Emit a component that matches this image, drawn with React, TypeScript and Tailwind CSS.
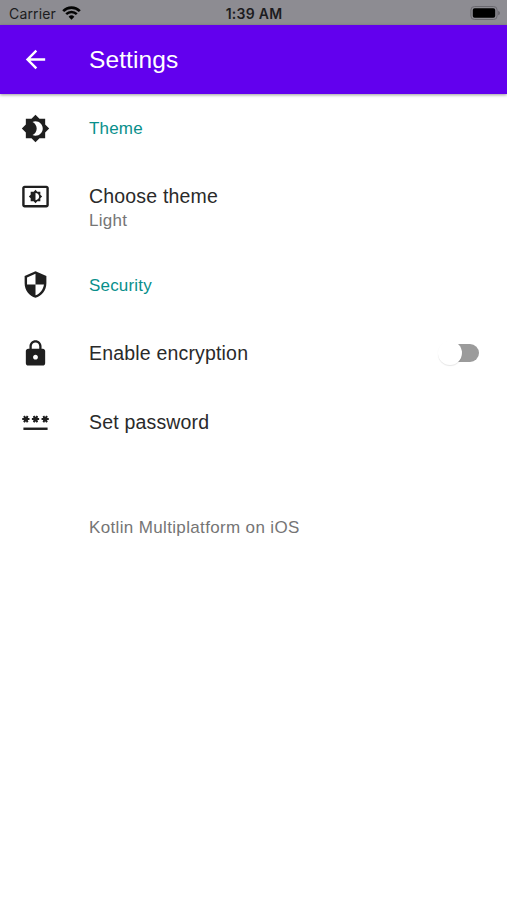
import React from 'react';
import { MdArrowBack, MdBrightness4, MdLock, MdSecurity, MdSettingsBrightness } from 'react-icons/md';

interface SettingRowProps {
  icon: React.ReactNode;
  children: React.ReactNode;
  trailing?: React.ReactNode;
}

const StatusBar: React.FC = () => (
  <div className="grid h-[25px] grid-cols-3 items-center bg-[#8d8c92] pt-[3px] font-['Inter',sans-serif] text-[14px] leading-none text-[#1c1c20]">
    <div className="flex items-center gap-[6px] pl-[9px]">
      <span className="tracking-[0.15px]">Carrier</span>
      <svg className="-mt-[2px] h-[14px] w-[19px]" viewBox="0 0 19 14" fill="none" stroke="#050505">
        <path d="M1.2 5.1a11.8 11.8 0 0 1 16.6 0" strokeWidth="2.7" />
        <path d="M4.2 8.2a7.6 7.6 0 0 1 10.6 0" strokeWidth="2.5" />
        <path d="M9.5 13.7 6.6 10.7a4.1 4.1 0 0 1 5.8 0Z" fill="#050505" stroke="none" />
      </svg>
    </div>
    <span className="pl-px text-center font-semibold tracking-[0.25px]">1:39 AM</span>
    <svg className="-mt-[3px] mr-[6px] h-[14px] w-[31px] justify-self-end" viewBox="0 0 31 14">
      <rect x="0.9" y="0.5" width="26.2" height="13" rx="3.5" fill="none" stroke="#6a696f" />
      <rect x="2.8" y="2.3" width="22.4" height="9.4" rx="1.8" fill="#000" />
      <path d="M28.3 4.7v4.6a2.5 2.5 0 0 0 0-4.6Z" fill="#5d5c62" />
    </svg>
  </div>
);

const PasswordIcon: React.FC = () => (
  <svg className="size-full" viewBox="0 0 24 24" fill="none" stroke="currentColor">
    <path d="M2 18h20" strokeWidth="2" />
    {[4, 12, 20].map((x) => (
      <g key={x} strokeWidth="1.6">
        <path d={`M${x - 3} 10h6M${x - 1.5} 7.4l3 5.2M${x + 1.5} 7.4l-3 5.2`} />
        <circle cx={x} cy="10" r="1.2" fill="currentColor" />
      </g>
    ))}
  </svg>
);

const SettingRow: React.FC<SettingRowProps> = ({ icon, children, trailing }) => (
  <div className="flex h-[68.5px] items-center pl-[20.5px] pr-[26px]">
    <div className="mr-[39.5px] mt-px size-[29px] shrink-0 text-[#1f1f1f]">{icon}</div>
    <div className="flex-1">{children}</div>
    {trailing}
  </div>
);

const Switch: React.FC = () => (
  <div className="relative mr-[2px] h-[18px] w-[34px] rounded-full bg-[#9b9b9b]" role="switch" aria-checked="false">
    <div className="absolute -left-[7px] -top-[3px] size-[24px] rounded-full bg-white shadow-[0_1px_1px_rgba(0,0,0,0.1)]" />
  </div>
);

const App: React.FC = () => (
  <div className="h-[900px] w-full overflow-hidden bg-white font-['Liberation_Sans',Arial,sans-serif] text-[19.5px] leading-6 tracking-[0.18px] text-[#2a2a2a]">
    <StatusBar />
    <header className="flex h-[68.5px] items-center bg-[#6200ee] pl-[20.5px] text-white shadow-[0_1px_3px_rgba(0,0,0,0.4)]">
      <MdArrowBack className="mr-[39.5px] size-[29px]" />
      <h1 className="pt-[2px] text-[24.5px] tracking-[0.1px]">Settings</h1>
    </header>

    <main>
      <SettingRow icon={<MdBrightness4 className="size-full" />}>
        <p className="pt-[2px] text-[17px] text-[#088f8b]">Theme</p>
      </SettingRow>

      <div className="flex h-[88px] pl-[20.5px] pt-[20px]">
        <MdSettingsBrightness className="mr-[39.5px] size-[29px] text-[#1f1f1f]" />
        <div className="pt-[2px]">
          <p>Choose theme</p>
          <p className="pt-px text-[17px] tracking-[0.3px] text-[#757575]">Light</p>
        </div>
      </div>

      <SettingRow icon={<MdSecurity className="size-full" />}>
        <p className="pt-[3px] text-[17px] text-[#088f8b]">Security</p>
      </SettingRow>
      <SettingRow icon={<MdLock className="size-full" />} trailing={<Switch />}>
        <p>Enable encryption</p>
      </SettingRow>
      <SettingRow icon={<PasswordIcon />}>
        <p className="pt-[2px]">Set password</p>
      </SettingRow>

      <p className="pl-[89px] pt-[60px] text-[17px] tracking-[0.35px] text-[#757575]">Kotlin Multiplatform on iOS</p>
    </main>
  </div>
);

export default App;
